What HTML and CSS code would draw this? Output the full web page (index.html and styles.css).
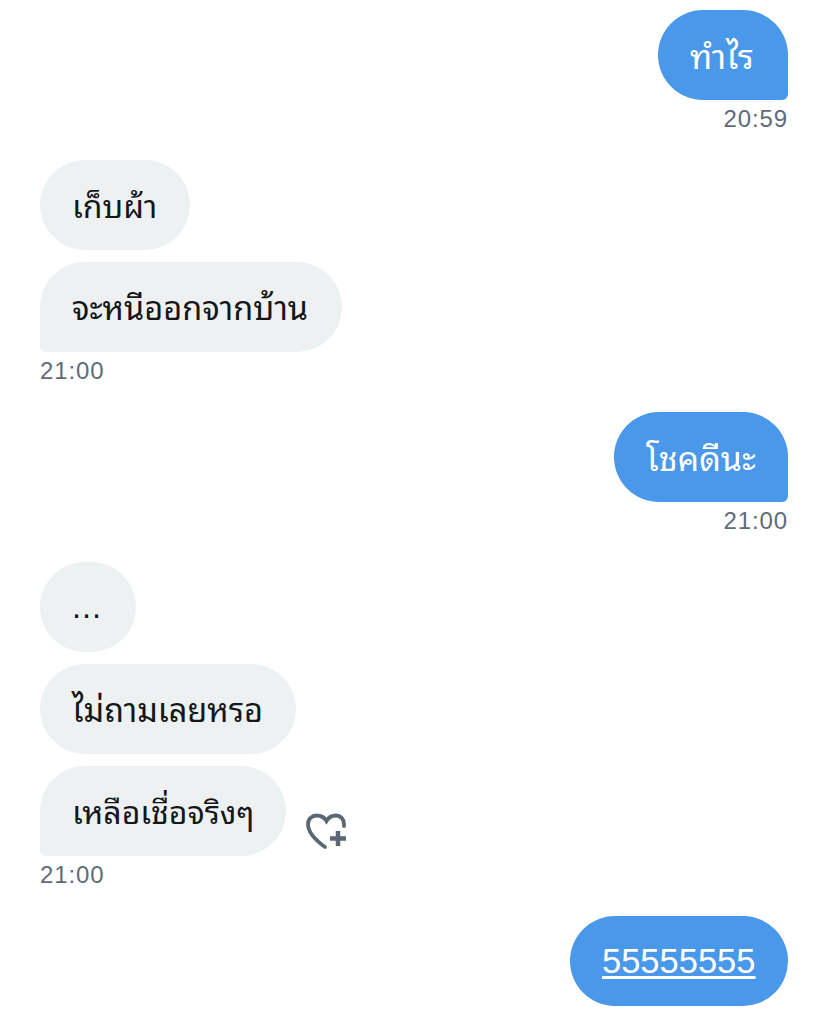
FILE: index.html
```html
<!DOCTYPE html>
<html lang="th">
<head>
<meta charset="utf-8">
<title>Chat</title>
<link rel="stylesheet" href="styles.css">
</head>
<body>
<main class="chat">
  <section class="group sent">
    <div class="bubble w-130">ทำไร</div>
    <div class="time">20:59</div>
  </section>
  <section class="group received">
    <div class="bubble w-150">เก็บผ้า</div>
    <div class="bubble last w-302">จะหนีออกจากบ้าน</div>
    <div class="time">21:00</div>
  </section>
  <section class="group sent">
    <div class="bubble w-174">โชคดีนะ</div>
    <div class="time">21:00</div>
  </section>
  <section class="group received">
    <div class="bubble w-96">...</div>
    <div class="bubble w-256">ไม่ถามเลยหรอ</div>
    <div class="row">
      <div class="bubble last w-246">เหลือเชื่อจริงๆ</div>
      <svg class="like" viewBox="0 0 42 38" width="42" height="38" aria-hidden="true">
        <path d="M20 35 C13 30 3 21 3 12 C3 7 7 3.500 11.500 3.500 C15.500 3.500 19.500 5.500 21.500 9 C23.500 5.500 27 3.500 31 3.500 C35.500 3.500 39 7 39 12 V14" fill="none" stroke="#5b6773" stroke-width="3.800" stroke-linecap="round"/>
        <path d="M33 19 V34 M25 26.500 H41" fill="none" stroke="#5b6773" stroke-width="4.500"/>
      </svg>
    </div>
    <div class="time">21:00</div>
  </section>
  <section class="group sent">
    <div class="bubble tail-none w-218"><a class="link" href="#">55555555</a></div>
  </section>
</main>
</body>
</html>
```
FILE: styles.css
```css
html, body {
  margin: 0;
  padding: 0;
  background: #fff;
}

body {
  font-family: "Liberation Sans", "Noto Sans Thai Looped", "Noto Sans Thai", "Noto Sans", sans-serif;
  overflow: hidden;
}

.chat {
  display: flex;
  flex-direction: column;
  gap: 22px;
  padding: 10px 40px 0;
}

.group {
  display: flex;
  flex-direction: column;
  gap: 12px;
}

.sent {
  align-items: flex-end;
}

.received {
  align-items: flex-start;
}

.bubble {
  box-sizing: border-box;
  height: 90px;
  padding: 3px 32px 0;
  border-radius: 45px;
  display: flex;
  align-items: center;
  font-size: 34px;
  line-height: 40px;
  white-space: nowrap;
}

.w-96 { width: 96px; }
.w-130 { width: 130px; }
.w-150 { width: 150px; }
.w-174 { width: 174px; }
.w-218 { width: 218px; }
.w-246 { width: 246px; }
.w-256 { width: 256px; }
.w-302 { width: 302px; }

.sent .bubble {
  background: #4a98e9;
  color: #fff;
  border-bottom-right-radius: 6px;
}

.sent .bubble.tail-none {
  padding-top: 0;
  border-bottom-right-radius: 45px;
}

.received .bubble {
  background: #eef1f2;
  color: #14171a;
  font-size: 32.500px;
}

.received .bubble.w-150,
.received .bubble.w-246 {
  font-size: 32px;
}

.received .bubble.last {
  border-bottom-left-radius: 6px;
}

.received .bubble.w-96 {
  padding-top: 0;
  letter-spacing: 1px;
}

.time {
  margin-top: -12px;
  height: 38px;
  line-height: 38px;
  font-size: 24px;
  letter-spacing: 0.9px;
  color: #5f6b78;
}

.row {
  display: flex;
  align-items: flex-end;
  gap: 19px;
}

.like {
  margin-bottom: 6px;
}

.link {
  color: #fff;
  font-size: 34.500px;
  text-decoration: underline;
  text-decoration-thickness: 3px;
  text-underline-offset: 3px;
}
```
